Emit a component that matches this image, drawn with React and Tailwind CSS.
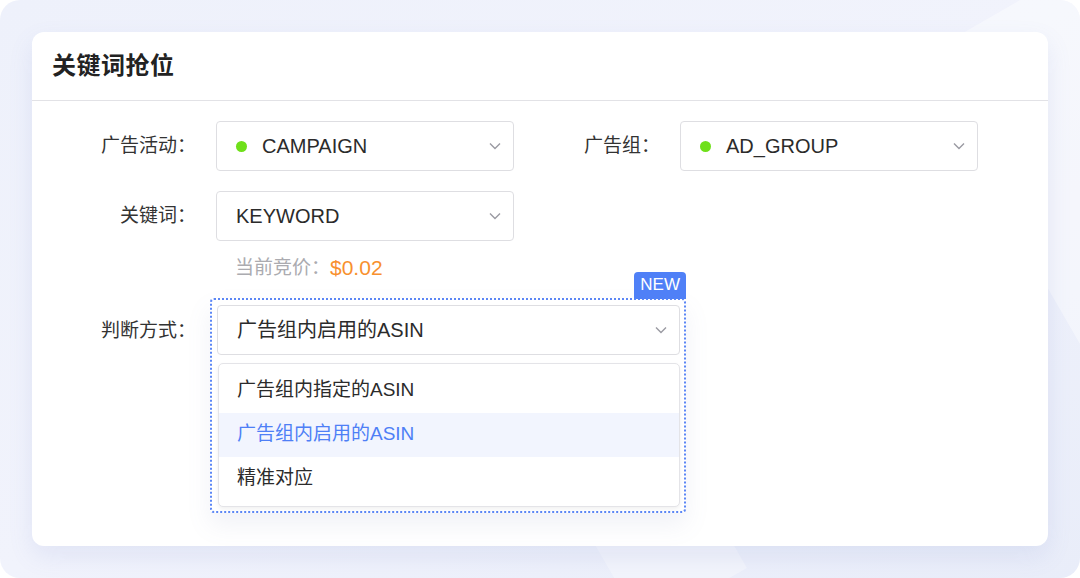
import React from 'react';

const FONT = { fontFamily: '"Liberation Sans", "Noto Sans CJK SC", sans-serif' };

function Chevron() {
  return (
    <svg width="12" height="8" viewBox="0 0 12 8" fill="none" stroke="#9a9aa2" strokeWidth="1.4">
      <polyline points="1 1.5 6 6.5 11 1.5" />
    </svg>
  );
}

function Select({ value, dot, width = 'w-[298px]' }) {
  return (
    <div className={`${width} h-[50px] shrink-0 flex items-center justify-between pl-[19px] pr-[12px] bg-white border border-[#dedee2] rounded-[4px]`}>
      <div className="flex items-center gap-[15px] text-[20px] text-[#2b2b2b]">
        {dot && <span className="w-[11px] h-[11px] rounded-full bg-[#6fe01a]" />}
        <span>{value}</span>
      </div>
      <Chevron />
    </div>
  );
}

function Label({ children, width = 'w-[164px]' }) {
  return (
    <div className={`${width} shrink-0 text-right text-[19px] text-[#333]`}>{children}</div>
  );
}

export default function App() {
  const options = ['广告组内指定的ASIN', '广告组内启用的ASIN', '精准对应'];
  const active = 1;

  return (
    <div className="w-[1080px] h-[578px] bg-white" style={FONT}>
      <div className="relative w-full h-full rounded-[20px] overflow-hidden bg-gradient-to-br from-[#eef1fb] via-[#f1f3fc] to-[#e9edf9] p-8">
        {/* soft diagonal streaks */}
        <div className="absolute top-0 right-[-60px] w-[240px] h-[700px] bg-white/40 rotate-[-30deg] origin-top" />
        <div className="absolute bottom-[-40px] left-[560px] w-[120px] h-[300px] bg-white/30 rotate-[-30deg]" />

        <div className="relative w-[1016px] h-[514px] bg-white rounded-[12px] shadow-[0_10px_24px_rgba(110,125,200,0.12)]">
          <div className="h-[69px] flex items-center pl-5 border-b border-[#e2e2e6]">
            <h1 className="text-[24px] font-bold text-[#222] tracking-[0.5px]">关键词抢位</h1>
          </div>

          <div className="pt-5 flex flex-col">
            <div className="flex items-center gap-5">
              <Label>广告活动：</Label>
              <Select value="CAMPAIGN" dot />
              <Label width="w-[126px]">广告组：</Label>
              <Select value="AD_GROUP" dot />
            </div>

            <div className="flex items-center gap-5 mt-5">
              <Label>关键词：</Label>
              <Select value="KEYWORD" />
            </div>
            <div className="ml-[203px] mt-[11px] flex items-center text-[19px] text-[#ababb0]">
              当前竞价：<span className="text-[21px] text-[#f8902e]">$0.02</span>
            </div>

            <div className="flex items-start mt-[14px]">
              <div className="w-[164px] shrink-0 text-right text-[19px] text-[#333] mt-[19px]">判断方式：</div>
              <div className="relative ml-[14px] w-[476px] h-[215px] border-2 border-dotted border-[#5b86f5] rounded-[4px] pl-[5px] pt-[5px] shadow-[0_12px_24px_rgba(120,130,180,0.10)]">
                <span className="absolute right-[-2px] top-[-28px] h-[27px] px-[6px] flex items-center bg-[#4f80f7] text-white text-[17px] rounded-t-[4px]">NEW</span>
                <Select value="广告组内启用的ASIN" width="w-[463px]" />
                <div className="mt-2 w-[462px] ml-px h-[144px] py-[5px] bg-white border border-[#e4e4e8] rounded-[5px] shadow-[0_2px_4px_rgba(0,0,0,0.06)]">
                  {options.map((opt, i) => (
                    <div
                      key={opt}
                      className={`h-[44px] flex items-center pl-[18px] text-[19px] ${i === active ? 'bg-[#f2f5fe] text-[#4e7ff6]' : 'text-[#2b2b2b]'}`}
                    >
                      {opt}
                    </div>
                  ))}
                </div>
              </div>
            </div>
          </div>
        </div>
      </div>
    </div>
  );
}
